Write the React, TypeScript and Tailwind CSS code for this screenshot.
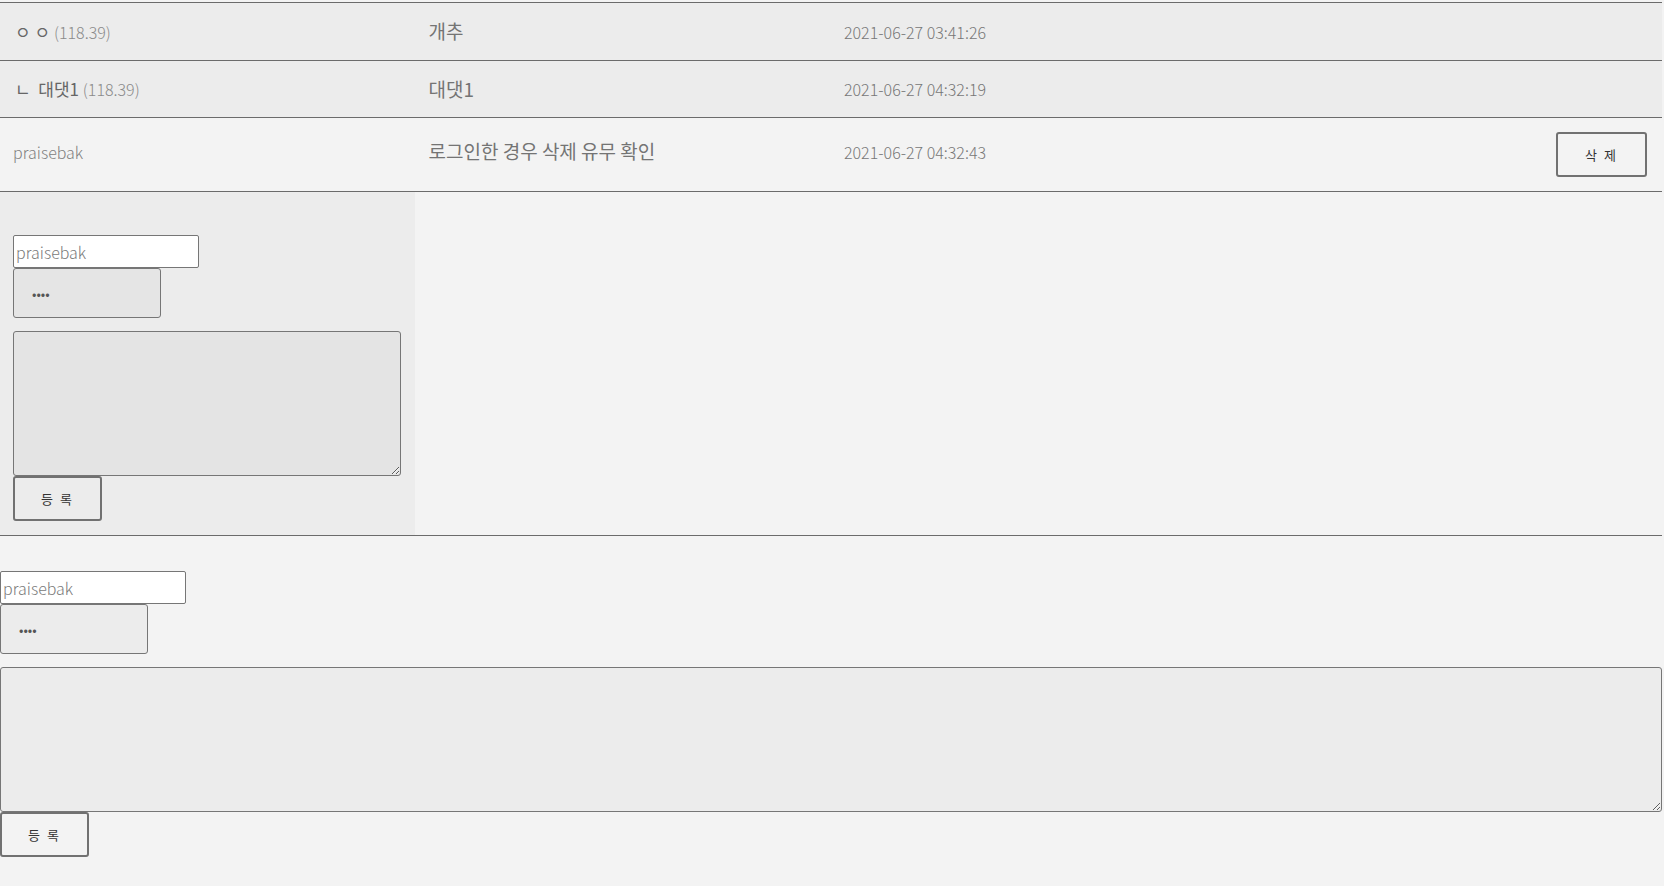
import React from 'react';

const rows = [
  { name: 'ㅇ ㅇ', ip: '(118.39)', content: '개추', date: '2021-06-27 03:41:26', h: 'h-[58px]' },
  { name: 'ㄴ  대댓1', ip: '(118.39)', content: '대댓1', date: '2021-06-27 04:32:19', h: 'h-[57px]' },
];

function CommentForm({ wide }: { wide?: boolean }) {
  return (
    <div>
      <input
        type="text"
        defaultValue="praisebak"
        className="block h-[33px] w-[186px] rounded-[2px] border border-[#767676] bg-white px-[2px] text-[16px] font-light text-[#7a7a7a] outline-none"
      />
      <input
        type="password"
        defaultValue="1234"
        className={
          'block h-[50px] w-[148px] rounded-[3px] border border-[#767676] pl-[18px] text-[13px] text-[#555] outline-none ' +
          (wide ? 'bg-[#ececec]' : 'bg-[#e5e5e5]')
        }
      />
      <textarea
        className={
          'mt-[13px] block h-[145px] rounded-[3px] border border-[#767676] outline-none ' +
          (wide ? 'w-full bg-[#ececec]' : 'w-[388px] bg-[#e4e4e4]')
        }
      />
      <button className="block h-[45px] w-[89px] rounded-[3px] border-2 border-[#717171] text-[13px] tracking-[2px] text-[#333]">
        등 록
      </button>
    </div>
  );
}

export default function App() {
  return (
    <div className="min-h-screen bg-[#f3f3f3] pt-[2px] font-['Noto_Sans_CJK_KR','Noto_Sans',sans-serif]">
      <div className="w-[1662px] border-t border-[#6b6b6b]">
        {rows.map((r) => (
          <div key={r.date} className={`grid grid-cols-4 items-center border-b border-[#6b6b6b] bg-[#ececec] ${r.h}`}>
            <div className="whitespace-pre pl-[15px] text-[17px] text-[#666]">
              {r.name} <span className="text-[16px] font-light text-[#8a8a8a]">{r.ip}</span>
            </div>
            <div className="pl-[13px] text-[19px] text-[#747474]">{r.content}</div>
            <div className="pl-[13px] text-[16px] font-light text-[#777]">{r.date}</div>
            <div />
          </div>
        ))}
        <div className="grid h-[74px] grid-cols-4 items-center border-b border-[#6b6b6b] bg-[#f3f3f3]">
          <div className="pb-[6px] pl-[13px] text-[16px] font-light text-[#808080]">praisebak</div>
          <div className="pb-[6px] pl-[13px] text-[19px] text-[#747474]">로그인한 경우 삭제 유무 확인</div>
          <div className="pb-[6px] pl-[13px] text-[16px] font-light text-[#777]">2021-06-27 04:32:43</div>
          <div className="flex justify-end pr-[15px]">
            <button className="h-[45px] w-[91px] rounded-[3px] border-2 border-[#717171] text-[13px] tracking-[2px] text-[#333]">
              삭 제
            </button>
          </div>
        </div>
        <div className="flex h-[344px] border-b border-[#6b6b6b]">
          <div className="w-[415px] bg-[#ececec] pl-[13px] pt-[43px]">
            <CommentForm />
          </div>
          <div className="flex-1" />
        </div>
        <div className="pt-[35px]">
          <CommentForm wide />
        </div>
      </div>
    </div>
  );
}
